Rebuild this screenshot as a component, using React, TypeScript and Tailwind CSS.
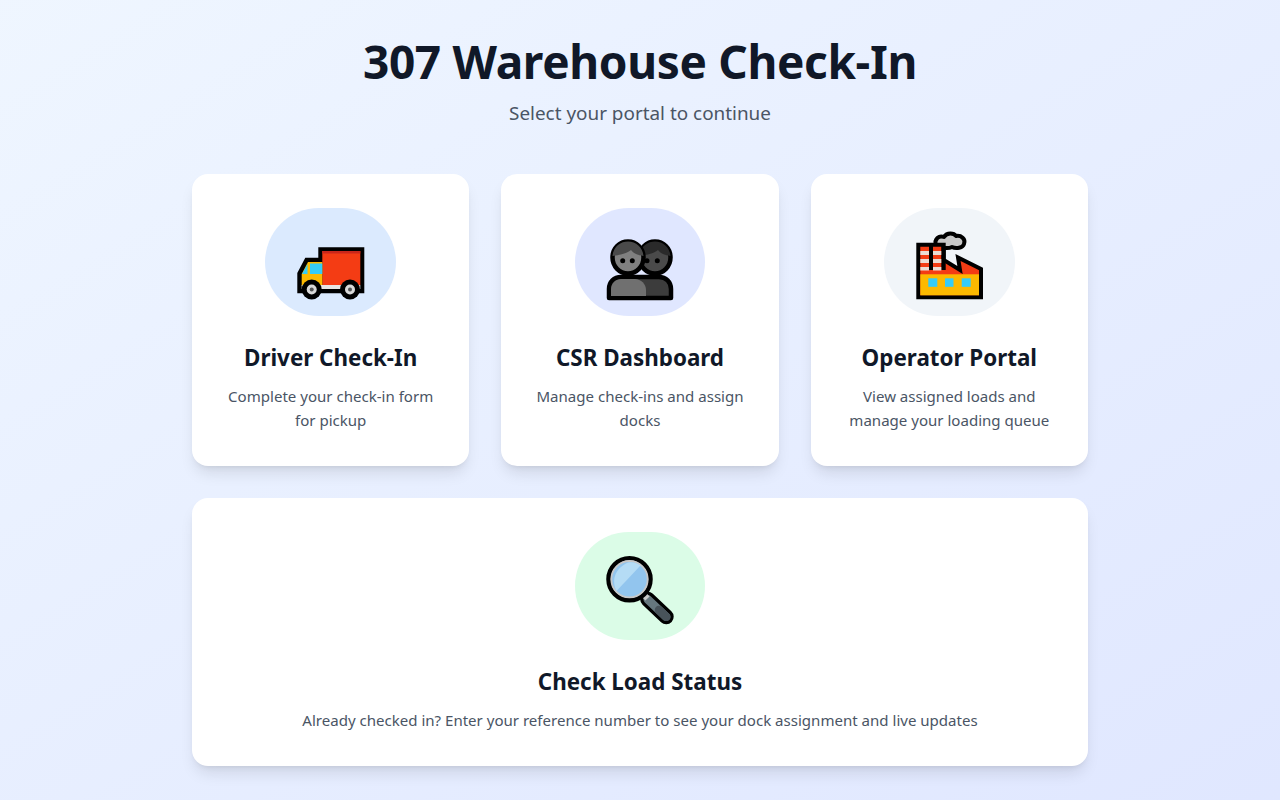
import type { ReactNode } from 'react';

function TruckIcon() {
  return (
    <svg width="130" height="108" viewBox="0 0 130 108">
      <path d="M34.3 83.3V65.5L41.5 51.7H55.3V41.3H97.3V83.3Z" fill="#000" stroke="#000" strokeWidth="4" />
      <rect x="57.3" y="43" width="38" height="34" fill="#f43c14" />
      <rect x="57.3" y="43" width="38" height="2.5" fill="#c9261b" />
      <path d="M36.7 78V66L43 54H57.3V78Z" fill="#fcb900" />
      <path d="M45 55.5H57.3V66H45Z" fill="#35ccf7" />
      <path d="M37 66L42.5 56V66Z" fill="#35ccf7" />
      <rect x="36.7" y="77" width="58.6" height="4" fill="#e8e6e3" />
      <circle cx="46.7" cy="81.5" r="10" fill="#000" />
      <circle cx="85" cy="81.5" r="10" fill="#000" />
      <circle cx="46.7" cy="81.5" r="5" fill="#d9d9d9" />
      <circle cx="85" cy="81.5" r="5" fill="#d9d9d9" />
      <circle cx="46.7" cy="81.5" r="2" fill="#555" />
      <circle cx="85" cy="81.5" r="2" fill="#555" />
    </svg>
  );
}

function PeopleIcon() {
  return (
    <svg width="130" height="108" viewBox="0 0 130 108">
      <path d="M34 90V81C34 74 39 69 46 69H84C91 69 96 74 96 81V90Z" fill="#3c3c3c" stroke="#000" strokeWidth="4.5" strokeLinejoin="round" />
      <path d="M36 88V81C36 75 41 71 46 71H60C66 71 71 76 71 82V88Z" fill="#707070" />
      <ellipse cx="80" cy="49.5" rx="15.5" ry="16" fill="#4a4a4a" stroke="#000" strokeWidth="4.5" />
      <path d="M64.500 48C65.500 38 73 33.500 80 33.500C88 33.500 94.500 39 95.500 48C89 47 85 45 83 42C80 45 72 47 64.500 48Z" fill="#2a2a2a" />
      <ellipse cx="53" cy="49.5" rx="15.5" ry="16" fill="#808080" stroke="#000" strokeWidth="4.5" />
      <path d="M37.500 48C38.500 38 46 33.500 53 33.500C61 33.500 67.500 39 68.500 48C62 47 58 45 56 42C53 45 45 47 37.500 48Z" fill="#4a4a4a" />
      <circle cx="47.7" cy="52.7" r="2.5" fill="#000" />
      <circle cx="57.3" cy="52.7" r="2.5" fill="#000" />
      <circle cx="72" cy="52.7" r="2.5" fill="#000" />
      <circle cx="82.3" cy="52.7" r="2.5" fill="#000" />
    </svg>
  );
}

function FactoryIcon() {
  return (
    <svg width="130" height="108" viewBox="0 0 130 108">
      <path d="M52 37C50 31 55 27 60 29C63 24 70 25 72 28C77 27 82 31 80 36C79 40 72 41 68 39C64 41 58 40 55 38" fill="#c8c8c8" stroke="#000" strokeWidth="4" strokeLinejoin="round" />
      <path d="M34.3 36.700H59.700V52L76 62L74 49.500L97 61V89.300H34.300Z" fill="#f43c14" stroke="#000" strokeWidth="4" />
      <rect x="36.3" y="66.3" width="58.7" height="21" fill="#fcb900" />
      <rect x="45" y="38" width="4" height="24" fill="#000" />
      <rect x="57.3" y="38" width="4.4" height="24" fill="#000" />
      <rect x="36.3" y="43" width="8.7" height="4" fill="#ecdcd4" />
      <rect x="36.3" y="51" width="8.7" height="4" fill="#ecdcd4" />
      <rect x="36.3" y="59" width="8.7" height="3.5" fill="#ecdcd4" />
      <rect x="49" y="43" width="8.3" height="4" fill="#ecdcd4" />
      <rect x="49" y="51" width="8.3" height="4" fill="#ecdcd4" />
      <rect x="49" y="59" width="8.3" height="3.5" fill="#ecdcd4" />
      <rect x="44.3" y="70.3" width="9" height="8.5" fill="#35ccf7" />
      <rect x="61" y="70.3" width="8.5" height="8.5" fill="#35ccf7" />
      <rect x="77.7" y="70.3" width="9" height="8.5" fill="#35ccf7" />
    </svg>
  );
}

function SearchIcon() {
  return (
    <svg width="130" height="108" viewBox="0 0 130 108">
      <path d="M72.7 67.3L91.2 84.8" stroke="#000" strokeWidth="15" strokeLinecap="round" />
      <path d="M72.7 67.3L91.2 84.8" stroke="#66777e" strokeWidth="8.5" strokeLinecap="round" />
      <path d="M84 78L91.2 84.8" stroke="#48535a" strokeWidth="8.5" strokeLinecap="round" />
      <path d="M68 62L72.5 66.5" stroke="#c8c8c8" strokeWidth="6" />
      <circle cx="54.5" cy="47.2" r="21" fill="#92c5ee" stroke="#000" strokeWidth="4.5" />
      <circle cx="54.5" cy="47.2" r="18.2" fill="#92c5ee" stroke="#c8c8c8" strokeWidth="1.8" />
      <path d="M41.5 59C36.5 49 39 37 53 30.5C58 29.5 62 31 65.5 33.5Z" fill="#b5dcf5" />
    </svg>
  );
}

function Card({ pill, icon, title, text }: { pill: string; icon: ReactNode; title: string; text: string }) {
  return (
    <div className="bg-white rounded-2xl shadow-lg p-[34px] flex flex-col items-center text-center">
      <div className={`w-[130.6px] h-[108px] rounded-full ${pill}`}>{icon}</div>
      <h2 className="mt-[26px] mb-[10px] text-[22.4px] leading-[32px] font-bold text-gray-900">{title}</h2>
      <p className="text-[15.05px] leading-6 text-gray-600">{text}</p>
    </div>
  );
}

export default function App() {
  return (
    <div className="min-h-screen bg-gradient-to-br from-blue-50 to-indigo-100 font-['Noto_Sans',sans-serif]">
      <div className="w-[896px] mx-auto pt-[31px] pb-8">
        <div className="text-center mb-[47px]">
          <h1 className="text-[46px] leading-[60px] tracking-[-0.35px] font-bold text-gray-900">307 Warehouse Check-In</h1>
          <p className="mt-2 text-[18.9px] leading-7 text-gray-600">Select your portal to continue</p>
        </div>
        <div className="grid grid-cols-3 gap-8">
          <Card pill="bg-blue-100" icon={<TruckIcon />} title="Driver Check-In" text="Complete your check-in form for pickup" />
          <Card pill="bg-indigo-100" icon={<PeopleIcon />} title="CSR Dashboard" text="Manage check-ins and assign docks" />
          <Card pill="bg-slate-100" icon={<FactoryIcon />} title="Operator Portal" text="View assigned loads and manage your loading queue" />
        </div>
        <div className="mt-8">
          <Card pill="bg-green-100" icon={<SearchIcon />} title="Check Load Status" text="Already checked in? Enter your reference number to see your dock assignment and live updates" />
        </div>
      </div>
    </div>
  );
}
